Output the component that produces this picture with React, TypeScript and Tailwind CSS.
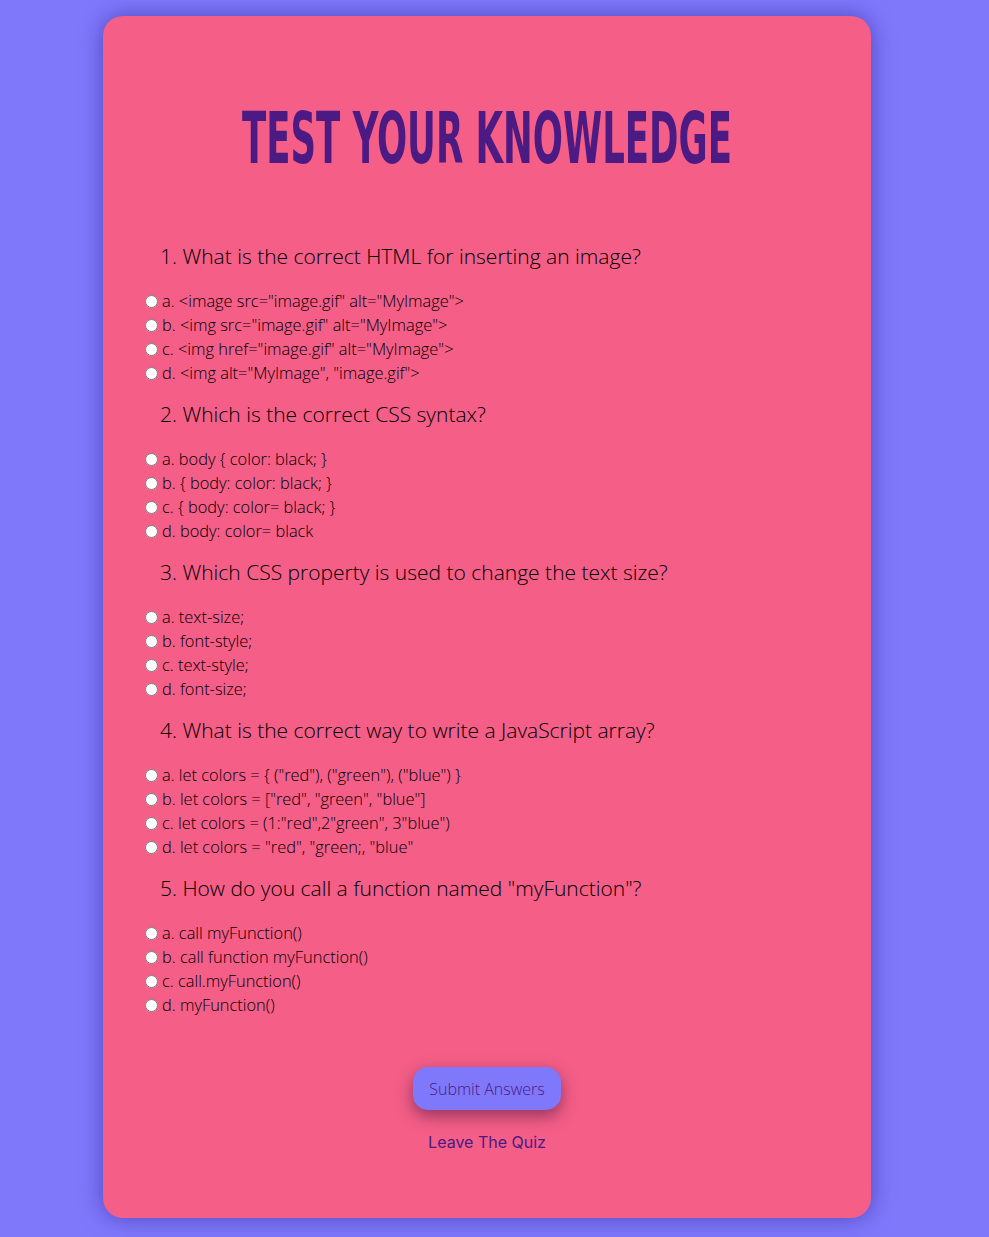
import React from 'react';

type Question = {
  title: string;
  options: string[];
};

const questions: Question[] = [
  {
    title: '1. What is the correct HTML for inserting an image?',
    options: [
      'a. <image src="image.gif" alt="MyImage">',
      'b. <img src="image.gif" alt="MyImage">',
      'c. <img href="image.gif" alt="MyImage">',
      'd. <img alt="MyImage", "image.gif">',
    ],
  },
  {
    title: '2. Which is the correct CSS syntax?',
    options: [
      'a. body { color: black; }',
      'b. { body: color: black; }',
      'c. { body: color= black; }',
      'd. body: color= black',
    ],
  },
  {
    title: '3. Which CSS property is used to change the text size?',
    options: ['a. text-size;', 'b. font-style;', 'c. text-style;', 'd. font-size;'],
  },
  {
    title: '4. What is the correct way to write a JavaScript array?',
    options: [
      'a. let colors = { ("red"), ("green"), ("blue") }',
      'b. let colors = ["red", "green", "blue"]',
      'c. let colors = (1:"red",2"green", 3"blue")',
      'd. let colors = "red", "green;, "blue"',
    ],
  },
  {
    title: '5. How do you call a function named "myFunction"?',
    options: [
      'a. call myFunction()',
      'b. call function myFunction()',
      'c. call.myFunction()',
      'd. myFunction()',
    ],
  },
];

const QuestionBlock: React.FC<{ q: Question; idx: number }> = ({ q, idx }) => (
  <div className="mb-[15px]">
    <p className="pl-[20px] text-[21px] leading-[28px] font-light text-black mb-[19px]">{q.title}</p>
    <div className="flex flex-col">
      {q.options.map((opt) => (
        <label key={opt} className="flex items-center h-6 text-[16.4px] font-light text-black">
          <input
            type="radio"
            name={`q${idx}`}
            className="w-[13px] h-[13px] ml-[5px] mr-[4px] accent-white"
          />
          <span>{opt}</span>
        </label>
      ))}
    </div>
  </div>
);

export default function App() {
  return (
    <div
      className="min-h-screen bg-[#7f78fb] pt-4 pb-[21px] pl-[103px]"
      style={{ fontFamily: '"Open Sans", "Noto Sans", sans-serif' }}
    >
      <div className="w-[768px] bg-[#f45e87] rounded-[20px] shadow-[0_0_22px_rgba(40,30,140,0.55)] pt-[86px] pb-[64px]">
        <div className="flex justify-center">
          <h1
            className="shrink-0 whitespace-nowrap text-[72px] leading-none font-bold uppercase text-[#4b1a82] scale-x-[0.548]"
            style={{ fontFamily: '"Liberation Sans Narrow", "DejaVu Sans Condensed", sans-serif' }}
          >
            Test Your Knowledge
          </h1>
        </div>
        <div className="pl-[37px] pt-[68px]">
          {questions.map((q, i) => (
            <QuestionBlock key={i} q={q} idx={i} />
          ))}
        </div>
        <div className="flex flex-col items-center pt-[35px]">
          <button className="w-[148px] h-[43px] rounded-[15px] bg-[#7f78fb] text-[#4b1a82] text-[16px] font-light shadow-[0_6px_16px_rgba(70,20,60,0.55)]">
            Submit Answers
          </button>
          <a
            href="#"
            className="mt-[20px] text-[16px] font-normal text-[#4b1a82]"
            style={{ fontFamily: 'Inter, sans-serif' }}
          >
            Leave The Quiz
          </a>
        </div>
      </div>
    </div>
  );
}
